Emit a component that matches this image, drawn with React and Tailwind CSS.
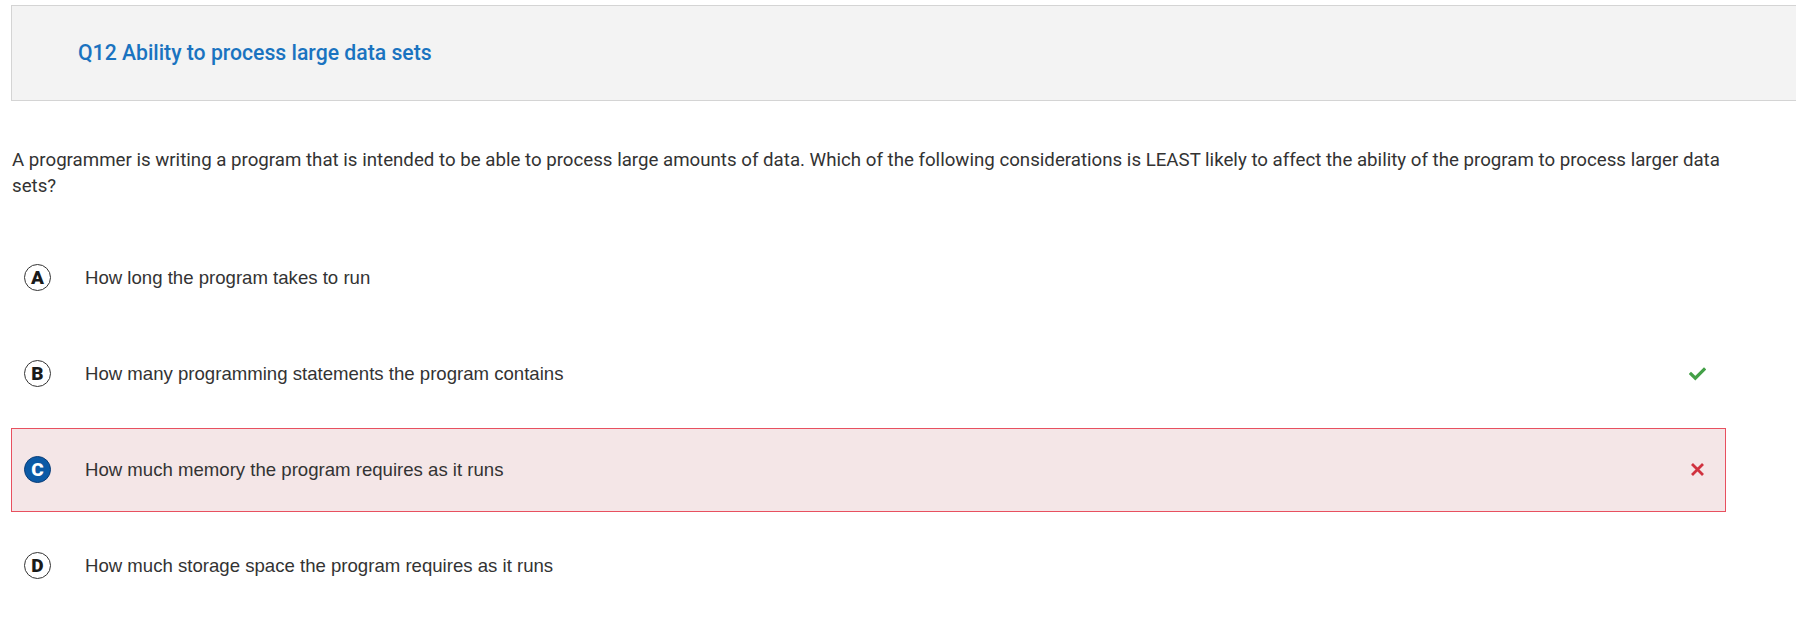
import React from "react";

const options = [
  { letter: "A", text: "How long the program takes to run", state: "none" },
  { letter: "B", text: "How many programming statements the program contains", state: "correct" },
  { letter: "C", text: "How much memory the program requires as it runs", state: "wrong" },
  { letter: "D", text: "How much storage space the program requires as it runs", state: "none" },
];

function Check() {
  return (
    <svg width="17" height="14" viewBox="0 0 17 14">
      <path d="M2 7 L6.3 11.2 L15 2.5" fill="none" stroke="#43a047" strokeWidth="3.2" strokeLinecap="square" />
    </svg>
  );
}

function Cross() {
  return (
    <svg width="15" height="15" viewBox="0 0 15 15">
      <path d="M2 2 L13 13 M13 2 L2 13" fill="none" stroke="#d0323f" strokeWidth="2.8" />
    </svg>
  );
}

function Option({ letter, text, state }) {
  const wrong = state === "wrong";
  return (
    <div
      className={
        "flex h-[84px] items-center pl-[12px] pr-[19px] border " +
        (wrong ? "border-[#e8505f] bg-[#f4e6e7]" : "border-transparent bg-white")
      }
    >
      <div
        className={
          "flex h-[27px] w-[27px] shrink-0 items-center justify-center rounded-full border text-[19px] font-black leading-none " +
          (wrong ? "border-[#0a3d78] bg-[#0b5aa6] text-white" : "border-[#333] bg-white text-[#1a1a1a]")
        }
        style={{ fontFamily: "Roboto, Arial, sans-serif" }}
      >
        {letter}
      </div>
      <div
        className="ml-[34px] flex-1 text-[18.6px] text-[#333]"
        style={{ fontFamily: "Arial, 'Liberation Sans', sans-serif" }}
      >
        {text}
      </div>
      <div className="flex w-[17px] items-center justify-center">
        {state === "correct" && <Check />}
        {state === "wrong" && <Cross />}
      </div>
    </div>
  );
}

export default function App() {
  return (
    <div className="min-h-[618px] overflow-hidden bg-white pl-[11px] pt-[5px]" style={{ fontFamily: "Roboto, sans-serif" }}>
      <div className="flex h-[96px] items-center border border-r-0 border-[#d4d4d4] bg-[#f3f3f3] pl-[66px]">
        <h2 className="text-[21.2px] font-medium text-[#1a73c0]">Q12 Ability to process large data sets</h2>
      </div>
      <div className="w-[1715px]">
        <p className="mt-[46px] pl-[1px] text-[18.7px] leading-[1.41] text-[#333]">
          A programmer is writing a program that is intended to be able to process large amounts of data. Which of the following considerations is LEAST likely to affect the ability of the program to process larger data sets?
        </p>
        <div className="mt-[36px] flex flex-col gap-[12px]">
          {options.map((o) => (
            <Option key={o.letter} {...o} />
          ))}
        </div>
      </div>
    </div>
  );
}
